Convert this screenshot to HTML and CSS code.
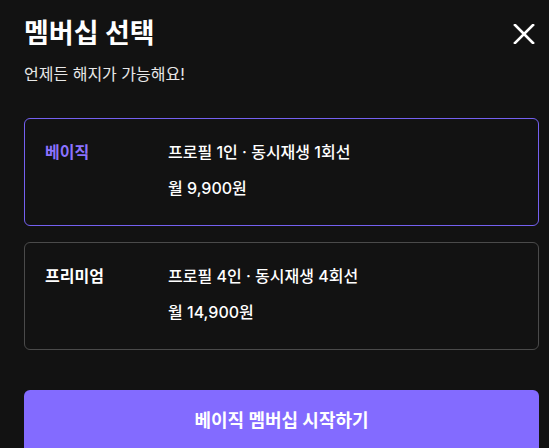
FILE: index.html
```html
<!DOCTYPE html>
<html lang="ko">
<head>
<meta charset="utf-8">
<link rel="stylesheet" href="styles.css">
</head>
<body>
<div class="modal">
  <div class="header">
    <h1 class="title">멤버십 선택</h1>
    <button class="close" aria-label="닫기">
      <svg width="22" height="20" viewBox="0 0 22 20"><path d="M2 1L20 19M20 1L2 19" stroke="#fff" stroke-width="2.6" stroke-linecap="square" fill="none"/></svg>
    </button>
  </div>
  <p class="subtitle">언제든 해지가 가능해요!</p>
  <div class="plans">
    <div class="plan selected">
      <div class="plan-name">베이직</div>
      <div class="plan-info">
        <div class="line">프로필 1인 · 동시재생 1회선</div>
        <div class="line">월 9,900원</div>
      </div>
    </div>
    <div class="plan">
      <div class="plan-name">프리미엄</div>
      <div class="plan-info">
        <div class="line">프로필 4인 · 동시재생 4회선</div>
        <div class="line">월 14,900원</div>
      </div>
    </div>
  </div>
  <button class="cta">베이직 멤버십 시작하기</button>
</div>
</body>
</html>
```
FILE: styles.css
```css
html, body {
  margin: 0;
  padding: 0;
  background: #121212;
  height: 100%;
  overflow: hidden;
}
body {
  font-family: "Inter", "Noto Sans CJK KR", "Noto Sans", sans-serif;
  color: #fff;
}
.modal {
  padding: 14px 10px 0 24px;
}
.header {
  display: flex;
  justify-content: space-between;
  align-items: center;
  padding-right: 4px;
}
.title {
  margin: 0;
  font-size: 27px;
  font-weight: 700;
  line-height: 40px;
}
.close {
  background: none;
  border: 0;
  padding: 0;
  width: 22px;
  height: 20px;
  display: flex;
  margin-top: 0;
}
.subtitle {
  margin: 8px 0 0;
  font-size: 16px;
  line-height: 24px;
  color: #e8e8e8;
}
.plans {
  margin-top: 32px;
  display: flex;
  flex-direction: column;
  gap: 16px;
  width: 515px;
}
.plan {
  border: 1px solid #4a4a4a;
  border-radius: 6px;
  display: flex;
  padding: 21px 20px 0 20px;
  height: 85px;
}
.plan.selected {
  border-color: #7460f0;
}
.plan-name {
  width: 123px;
  font-size: 16px;
  font-weight: 700;
  line-height: 24px;
}
.selected .plan-name {
  color: #8b72ff;
}
.plan-info {
  display: flex;
  flex-direction: column;
  gap: 12px;
}
.line {
  font-size: 16px;
  font-weight: 500;
  line-height: 24px;
}
.cta {
  display: block;
  margin-top: 40px;
  width: 515px;
  height: 64px;
  border: 0;
  border-radius: 6px;
  background: #836bff;
  color: #fff;
  font-family: inherit;
  font-size: 18px;
  font-weight: 700;
  padding: 0 0 6px;
}
```
